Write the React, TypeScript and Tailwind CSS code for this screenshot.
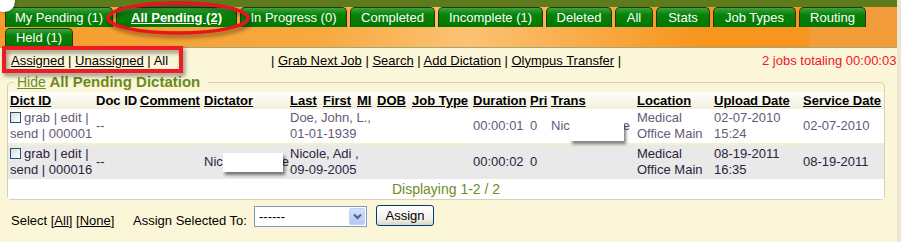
const tabs = [
  { label: "My Pending (1)", w: "w-[108px]" },
  { label: "All Pending (2)", w: "w-[121px]", active: true },
  { label: "In Progress (0)", w: "w-[107px]" },
  { label: "Completed", w: "w-[85px]" },
  { label: "Incomplete (1)", w: "w-[105px]" },
  { label: "Deleted", w: "w-[66px]" },
  { label: "All", w: "w-[38px]" },
  { label: "Stats", w: "w-[54px]" },
  { label: "Job Types", w: "w-[83px]" },
  { label: "Routing", w: "w-[67px]" },
];

const Tab = ({ label, w, active, h }: { label: string; w: string; active?: boolean; h: string }) => (
  <div
    className={`${w} ${h} shrink-0 flex items-center justify-center rounded-t-[5px] border border-b-0 border-[#2c3512] bg-[linear-gradient(#3ba53b,#0a820a_35%,#007700)] text-white whitespace-nowrap ${
      active ? "font-bold underline" : ""
    }`}
  >
    {label}
  </div>
);

const Check = () => (
  <span className="inline-block w-[11px] h-[11px] mr-[3px] border border-[#1c5180] bg-[linear-gradient(135deg,#dcdcd7,#ffffff)] align-[-1px]" />
);

const Redact = ({ w, offset }: { w: string; offset: string }) => (
  <span className={`relative z-10 ${w} h-[19px] ${offset} shrink-0 bg-white shadow-[2px_3px_3px_rgba(0,0,0,0.5)]`} />
);

const App = () => {
  return (
    <div className="relative w-[901px] h-[242px] flex overflow-hidden bg-[#fcf6d8] font-['Liberation_Sans',Arial,sans-serif] text-[13px] text-black">
      <div className="w-[897px] shrink-0 flex flex-col overflow-hidden">
        {/* header with tabs */}
        <div className="h-[48px] shrink-0 flex flex-col border-b border-[#a3a57c] bg-[linear-gradient(90deg,#f59d2c_0%,#f7a83e_35%,#fcc273_52%,#f9aa45_66%,#f7951d_78%,#f7951e_90%,#f39c3a_90.5%)]">
          <div className="h-[7px] shrink-0 bg-[#5e7b1c]" />
          <div className="flex gap-[3px] pl-[5px]">
            {tabs.map((t) => (
              <Tab key={t.label} label={t.label} w={t.w} active={t.active} h="h-[20px]" />
            ))}
          </div>
          <div className="flex pl-[5px] mt-[1px]">
            <Tab label="Held (1)" w="w-[68px]" h="h-[19px]" />
          </div>
        </div>

        {/* link row */}
        <div className="h-[25px] shrink-0 flex items-center whitespace-nowrap">
          <div className="w-[271px] shrink-0 pl-[11px]">
            <span className="underline">Assigned</span> | <span className="underline">Unassigned</span> | All
          </div>
          <div className="w-[491px] shrink-0">
            | <span className="underline">Grab Next Job</span> | <span className="underline">Search</span> |{" "}
            <span className="underline">Add Dictation</span> | <span className="underline">Olympus Transfer</span> |
          </div>
          <div className="text-[#f0142d]">2 jobs totaling 00:00:03</div>
        </div>

        {/* pending list */}
        <fieldset className="ml-[7px] w-[878px] shrink-0 border border-[#d7d2b6] rounded-[4px]">
          <legend className="ml-[6px] pl-[3px] pr-[8px] leading-[18px] whitespace-nowrap">
            <span className="text-[14px] underline text-[#6b8e23]">Hide</span>{" "}
            <span className="text-[15px] font-bold text-[#6a8a1e]">All Pending Dictation</span>
          </legend>
          <table className="table-fixed border-collapse w-[876px]">
            <colgroup>
              <col className="w-[86px]" />
              <col className="w-[44px]" />
              <col className="w-[64px]" />
              <col className="w-[86px]" />
              <col className="w-[33px]" />
              <col className="w-[34px]" />
              <col className="w-[20px]" />
              <col className="w-[35px]" />
              <col className="w-[61px]" />
              <col className="w-[57px]" />
              <col className="w-[21px]" />
              <col className="w-[86px]" />
              <col className="w-[77px]" />
              <col className="w-[89px]" />
              <col className="w-[83px]" />
            </colgroup>
            <thead>
              <tr className="h-[17px] bg-[linear-gradient(#fffffa,#f2efdd)]">
                {[
                  ["Dict ID", true],
                  ["Doc ID", false],
                  ["Comment", true],
                  ["Dictator", true],
                  ["Last", true],
                  ["First", true],
                  ["MI", true],
                  ["DOB", true],
                  ["Job Type", true],
                  ["Duration", true],
                  ["Pri", true],
                  ["Trans", true],
                  ["Location", true],
                  ["Upload Date", true],
                  ["Service Date", true],
                ].map(([h, u]) => (
                  <th
                    key={h as string}
                    className={`p-0 pl-[2px] text-left font-bold leading-[17px] whitespace-nowrap overflow-visible ${u ? "underline" : ""}`}
                  >
                    {h}
                  </th>
                ))}
              </tr>
            </thead>
            <tbody className="leading-[16px]">
              <tr className="h-[35px] bg-white text-[#645a76] align-middle">
                <td className="p-0 pl-[2px] whitespace-nowrap">
                  <Check />grab | edit |<br />send | 000001
                </td>
                <td className="p-0 pl-[2px]">--</td>
                <td className="p-0" />
                <td className="p-0" />
                <td className="p-0 pl-[2px] whitespace-nowrap" colSpan={4}>
                  Doe, John, L.,<br />01-01-1939
                </td>
                <td className="p-0" />
                <td className="p-0 pl-[2px]">00:00:01</td>
                <td className="p-0 pl-[2px]">0</td>
                <td className="p-0 pl-[2px]">
                  <span className="flex items-center">
                    <span>Nic</span>
                    <Redact w="w-[54px]" offset="translate-y-[5px]" />
                    <span className="-ml-[1px]">e</span>
                  </span>
                </td>
                <td className="p-0 pl-[2px] whitespace-nowrap">
                  Medical<br />Office Main
                </td>
                <td className="p-0 pl-[2px] whitespace-nowrap">
                  02-07-2010<br />15:24
                </td>
                <td className="p-0 pl-[2px]">02-07-2010</td>
              </tr>
              <tr className="h-[35px] bg-[#e9e9e9] text-[#2b2340] border-t-2 border-[#f5efce] align-middle">
                <td className="p-0 pl-[2px] whitespace-nowrap">
                  <Check />grab | edit |<br />send | 000016
                </td>
                <td className="p-0 pl-[2px]">--</td>
                <td className="p-0" />
                <td className="p-0 pl-[2px]">
                  <span className="flex items-center">
                    <span>Nic</span>
                    <Redact w="w-[60px]" offset="translate-y-[0px]" />
                    <span className="-ml-[1px]">e</span>
                  </span>
                </td>
                <td className="p-0 pl-[2px] whitespace-nowrap" colSpan={4}>
                  Nicole, Adi ,<br />09-09-2005
                </td>
                <td className="p-0" />
                <td className="p-0 pl-[2px]">00:00:02</td>
                <td className="p-0 pl-[2px]">0</td>
                <td className="p-0" />
                <td className="p-0 pl-[2px] whitespace-nowrap">
                  Medical<br />Office Main
                </td>
                <td className="p-0 pl-[2px] whitespace-nowrap">
                  08-19-2011<br />16:35
                </td>
                <td className="p-0 pl-[2px]">08-19-2011</td>
              </tr>
              <tr className="h-[20px] bg-white">
                <td colSpan={15} className="p-0 text-center text-[14px] text-[#6f8c1c]">
                  Displaying 1-2 / 2
                </td>
              </tr>
            </tbody>
          </table>
        </fieldset>

        {/* bottom controls */}
        <div className="flex items-start mt-[5px] pl-[11px] whitespace-nowrap">
          <span className="w-[122px] shrink-0 mt-[8px] leading-[15px]">
            Select [<span className="underline">All</span>] [<span className="underline">None</span>]
          </span>
          <span className="w-[121px] shrink-0 mt-[8px] leading-[15px]">Assign Selected To:</span>
          <div className="mt-[1px] w-[113px] h-[21px] shrink-0 flex border border-[#7f9db9] bg-white">
            <span className="flex-1 pl-[4px] leading-[19px]">------</span>
            <span className="w-[16px] h-[17px] m-[1px] rounded-[2px] flex items-center justify-center bg-[linear-gradient(#d3e0fd,#b3c8f5)] border border-[#c4d3f7]">
              <svg width="9" height="7" viewBox="0 0 9 7">
                <path d="M1 1.5 L4.5 5 L8 1.5" fill="none" stroke="#4d6185" strokeWidth="2" />
              </svg>
            </span>
          </div>
          <div className="ml-[9px] w-[58px] h-[21px] shrink-0 flex items-center justify-center rounded-[3px] border border-[#003c74] bg-[linear-gradient(#ffffff,#f0efe8_70%,#d9d6c8)]">
            Assign
          </div>
        </div>
      </div>
      <div className="w-[4px] shrink-0 bg-[#ebe7d2]" />

      {/* annotation overlays */}
      <div className="absolute -left-[7px] -top-[9px] w-[22px] h-[21px] rounded-full bg-white shadow-[1px_1px_2px_rgba(0,0,0,0.25)]" />
      <svg className="absolute left-0 top-0 pointer-events-none" width="901" height="242">
        <defs>
          <filter id="sh" x="-10%" y="-30%" width="130%" height="170%">
            <feDropShadow dx="2" dy="3" stdDeviation="2" floodColor="#000" floodOpacity="0.45" />
          </filter>
        </defs>
        <ellipse cx="178" cy="18" rx="70" ry="15" fill="none" stroke="#e3151c" strokeWidth="3.5" filter="url(#sh)" />
        <rect x="4" y="48" width="177" height="23" fill="none" stroke="#ee1c24" strokeWidth="4" filter="url(#sh)" />
      </svg>
    </div>
  );
};

export default App;
